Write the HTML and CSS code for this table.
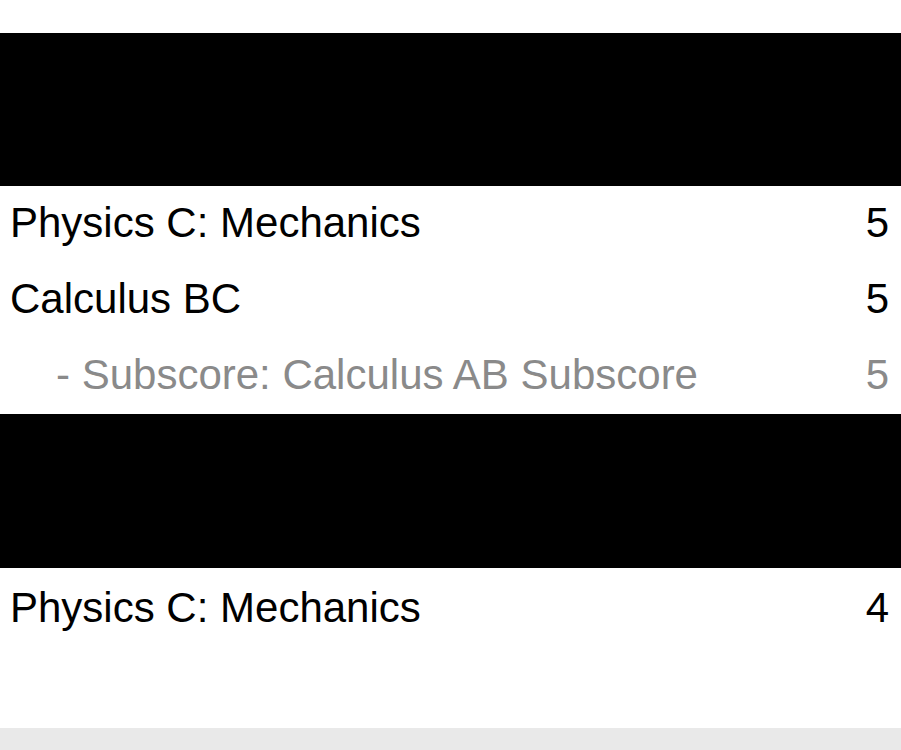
FILE: index.html
```html
<!DOCTYPE html>
<html>
<head>
<meta charset="utf-8">
<link rel="stylesheet" href="styles.css">
</head>
<body>
<div class="page">
  <div class="top-gap"></div>
  <div class="band"></div>
  <div class="list">
    <div class="row"><span class="name">Physics C: Mechanics</span><span class="score">5</span></div>
    <div class="row"><span class="name">Calculus BC</span><span class="score">5</span></div>
    <div class="row sub"><span class="name">- Subscore: Calculus AB Subscore</span><span class="score">5</span></div>
  </div>
  <div class="band band-second"></div>
  <div class="list list-last">
    <div class="row"><span class="name">Physics C: Mechanics</span><span class="score">4</span></div>
  </div>
  <div class="spacer"></div>
  <div class="footer"></div>
</div>
</body>
</html>
```
FILE: styles.css
```css
html, body {
  margin: 0;
  padding: 0;
  background: #fff;
}
.page {
  width: 901px;
  height: 750px;
  display: flex;
  flex-direction: column;
  font-family: "Liberation Sans", Arial, sans-serif;
  overflow: hidden;
}
.top-gap {
  height: 33px;
  flex: none;
}
.band {
  height: 153px;
  background: #000;
  flex: none;
}
.band-second {
  height: 154px;
}
.list {
  display: flex;
  flex-direction: column;
  flex: none;
}
.list-last {
  padding-top: 3px;
}
.row {
  height: 76px;
  line-height: 73px;
  font-size: 42px;
  color: #000;
  display: flex;
  justify-content: space-between;
  padding: 0 12px 0 10px;
}
.row.sub {
  color: #8a8a8a;
  padding-left: 56px;
}
.spacer {
  flex: 1;
}
.footer {
  height: 22px;
  background: #e9e9e9;
  flex: none;
}
```
